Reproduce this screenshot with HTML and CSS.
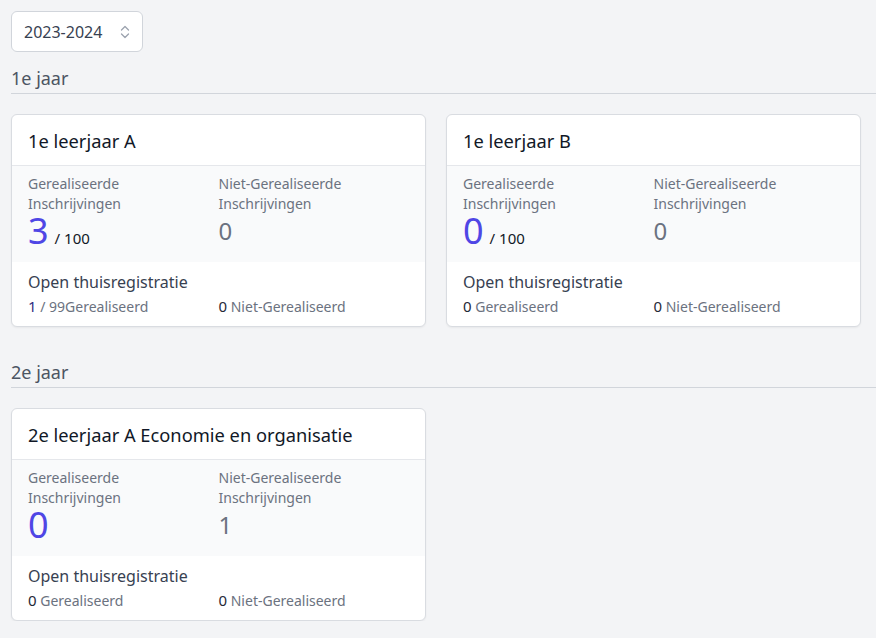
FILE: index.html
```html
<!DOCTYPE html>
<html lang="nl">
<head>
<meta charset="utf-8">
<link rel="stylesheet" href="styles.css">
</head>
<body>
<div class="page">
  <div class="select">
    <span>2023-2024</span>
    <svg class="chev" width="12" height="16" viewBox="0 0 12 16"><path d="M2.5 6 L6 2.5 L9.5 6 M2.5 10 L6 13.5 L9.5 10" fill="none" stroke="#9ca3af" stroke-width="1.3" stroke-linecap="round" stroke-linejoin="round"/></svg>
  </div>

  <section class="year">
    <h2 class="year-title">1e jaar</h2>
    <div class="grid">
      <div class="card">
        <div class="card-head">1e leerjaar A</div>
        <div class="card-stats">
          <div class="stat">
            <div class="label">Gerealiseerde<br>Inschrijvingen</div>
            <div class="big"><span class="num">3</span><span class="of">/ 100</span></div>
          </div>
          <div class="stat">
            <div class="label">Niet-Gerealiseerde<br>Inschrijvingen</div>
            <div class="big"><span class="num gray">0</span></div>
          </div>
        </div>
        <div class="card-foot">
          <div class="foot-title">Open thuisregistratie</div>
          <div class="foot-row">
            <div><span class="fnum dark">1</span><span class="ftxt"> / 99Gerealiseerd</span></div>
            <div><span class="fnum">0</span><span class="ftxt"> Niet-Gerealiseerd</span></div>
          </div>
        </div>
      </div>
      <div class="card">
        <div class="card-head">1e leerjaar B</div>
        <div class="card-stats">
          <div class="stat">
            <div class="label">Gerealiseerde<br>Inschrijvingen</div>
            <div class="big"><span class="num">0</span><span class="of">/ 100</span></div>
          </div>
          <div class="stat">
            <div class="label">Niet-Gerealiseerde<br>Inschrijvingen</div>
            <div class="big"><span class="num gray">0</span></div>
          </div>
        </div>
        <div class="card-foot">
          <div class="foot-title">Open thuisregistratie</div>
          <div class="foot-row">
            <div><span class="fnum">0</span><span class="ftxt"> Gerealiseerd</span></div>
            <div><span class="fnum">0</span><span class="ftxt"> Niet-Gerealiseerd</span></div>
          </div>
        </div>
      </div>
    </div>
  </section>

  <section class="year">
    <h2 class="year-title">2e jaar</h2>
    <div class="grid">
      <div class="card">
        <div class="card-head">2e leerjaar A Economie en organisatie</div>
        <div class="card-stats">
          <div class="stat">
            <div class="label">Gerealiseerde<br>Inschrijvingen</div>
            <div class="big"><span class="num">0</span></div>
          </div>
          <div class="stat">
            <div class="label">Niet-Gerealiseerde<br>Inschrijvingen</div>
            <div class="big"><span class="num gray">1</span></div>
          </div>
        </div>
        <div class="card-foot">
          <div class="foot-title">Open thuisregistratie</div>
          <div class="foot-row">
            <div><span class="fnum">0</span><span class="ftxt"> Gerealiseerd</span></div>
            <div><span class="fnum">0</span><span class="ftxt"> Niet-Gerealiseerd</span></div>
          </div>
        </div>
      </div>
    </div>
  </section>
</div>
</body>
</html>
```

FILE: styles.css
```css
* { box-sizing: border-box; }
html, body { margin: 0; padding: 0; }
body {
  background: #f3f4f6;
  font-family: "Noto Sans", "Open Sans", sans-serif;
  color: #111827;
}
.page {
  padding: 11px 0 0 11px;
}
.select {
  width: 132px;
  height: 41px;
  background: #fff;
  border: 1px solid #d1d5db;
  border-radius: 6px;
  display: flex;
  align-items: center;
  justify-content: space-between;
  padding: 0 11px 0 12px;
  font-size: 16px;
  color: #374151;
}
.chev { display: block; }
.year { margin-top: 14px; }
.year + .year { margin-top: 33px; }
.year-title {
  margin: 0;
  font-size: 18px;
  font-weight: 400;
  color: #4b5563;
  line-height: 24px;
  padding-bottom: 3px;
  border-bottom: 1px solid #d1d5db;
}
.grid {
  display: grid;
  grid-template-columns: 415px 415px;
  column-gap: 20px;
  margin-top: 20px;
}
.card {
  background: #fff;
  border: 1px solid #d9dce1;
  border-radius: 6px;
  box-shadow: 0 1px 2px rgba(0,0,0,0.05);
  overflow: hidden;
}
.card-head {
  padding: 0 16px;
  height: 51px;
  display: flex;
  align-items: center;
  font-size: 18.3px;
  color: #111827;
  border-bottom: 1px solid #e5e7eb;
}
.card-stats {
  background: #f9fafb;
  display: grid;
  grid-template-columns: 1fr 1fr;
  padding: 8px 16px 0;
  height: 96px;
}
.label {
  font-size: 14px;
  line-height: 20px;
  color: #6b7280;
}
.big {
  display: flex;
  align-items: baseline;
  margin-top: -1px;
}
.num {
  font-size: 36px;
  line-height: 36px;
  color: #4f46e5;
}
.num.gray { color: #6b7280; font-size: 24px; line-height: 36px; }
.of {
  font-size: 15px;
  color: #111827;
  margin-left: 6px;
}
.card-foot {
  padding: 8px 16px 7px;
}
.foot-title {
  font-size: 16px;
  line-height: 24px;
  color: #374151;
}
.foot-row {
  display: grid;
  grid-template-columns: 1fr 1fr;
  line-height: 24px;
}
.fnum { font-size: 15px; color: #1f2937; }
.fnum.dark { color: #312e81; }
.ftxt { font-size: 14px; color: #6b7280; }
```
